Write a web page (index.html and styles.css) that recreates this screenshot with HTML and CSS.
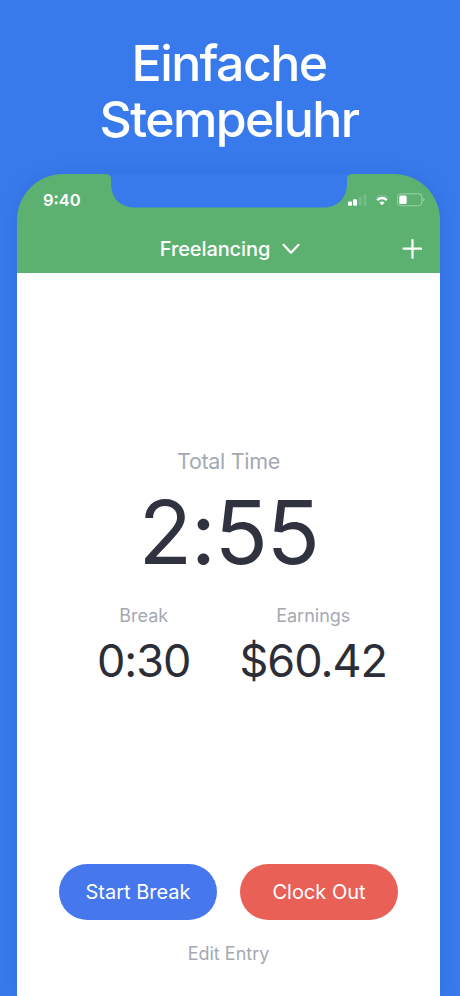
FILE: index.html
```html
<!DOCTYPE html>
<html lang="de">
<head>
    <meta charset="UTF-8">
    <meta name="viewport" content="width=device-width, initial-scale=1.0">
    <title>Einfache Stempeluhr</title>
    <link rel="stylesheet" href="styles.css">
</head>
<body>
    <h1 class="headline">Einfache<br>Stempeluhr</h1>

    <div class="phone">
        <header class="header">
            <svg class="notch" width="248" height="34" viewBox="0 0 248 34">
                <path d="M0 0H248C244.500 0 242 1.500 242 5V9C242 24 233 33.500 218 33.500H30C15 33.500 6 24 6 9V5C6 1.500 3.500 0 0 0Z" fill="#387aec"/>
            </svg>
            <div class="status-bar">
                <span class="clock">9:40</span>
                <div class="status-icons">
                    <svg width="19" height="12" viewBox="0 0 19 12" fill="#fff">
                        <rect x="0" y="7.500" width="4" height="4.300" rx="1"/>
                        <rect x="5" y="5.300" width="4" height="6.500" rx="1"/>
                        <rect x="10.800" y="2.500" width="3" height="9.300" rx="1" opacity=".15"/>
                        <rect x="15.500" y="0.300" width="3" height="11.500" rx="1" opacity=".15"/>
                    </svg>
                    <svg width="16" height="12" viewBox="0 0 16 12" fill="none" stroke="#fff">
                        <path d="M1.500 4.200Q8 -1.600 14.500 4.200" stroke-width="1.800" opacity=".15"/>
                        <path d="M3.200 6.200Q8 1.900 12.800 6.200" stroke-width="2.300"/>
                        <path d="M5.400 8.600Q8 6.400 10.600 8.600L8 11.300Z" fill="#fff" stroke="none"/>
                    </svg>
                    <svg width="28" height="14" viewBox="0 0 28 14">
                        <rect x=".5" y=".8" width="24.300" height="12" rx="3.200" fill="none" stroke="#fff" opacity=".4"/>
                        <rect x="2.300" y="2.600" width="7.400" height="8.500" rx="1.500" fill="#fff"/>
                        <path d="M26.300 4.800Q28.500 6.800 26.300 8.800Z" fill="#fff" opacity=".5"/>
                    </svg>
                </div>
            </div>
            <div class="nav-bar">
                <div class="job">
                    <span>Freelancing</span>
                    <svg width="18" height="12" viewBox="0 0 18 12" fill="none" stroke="#fff" stroke-width="2.200" stroke-linecap="round" stroke-linejoin="round">
                        <path d="M1.500 1.800L9 9.800L16.500 1.800"/>
                    </svg>
                </div>
                <svg class="add" width="20" height="20" viewBox="0 0 20 20" stroke="#fff" stroke-width="2.200" stroke-linecap="round">
                    <path d="M10.500 1.200V18.800M1.700 9.700H19.300"/>
                </svg>
            </div>
        </header>

        <main class="content">
            <div class="total">
                <div class="total-label">Total Time</div>
                <div class="total-value">2:55</div>
            </div>
            <div class="stats">
                <div class="stat">
                    <div class="stat-label">Break</div>
                    <div class="stat-value">0:30</div>
                </div>
                <div class="stat">
                    <div class="stat-label">Earnings</div>
                    <div class="stat-value">$60.42</div>
                </div>
            </div>
            <div class="actions">
                <button class="btn btn-break">Start Break</button>
                <button class="btn btn-out">Clock Out</button>
            </div>
            <a class="edit">Edit Entry</a>
        </main>
    </div>
</body>
</html>
```

FILE: styles.css
```css
* {
    margin: 0;
    padding: 0;
    box-sizing: border-box;
}

body {
    height: 996px;
    overflow: hidden;
    background-color: #387aec;
    font-family: Inter, "Liberation Sans", sans-serif;
}

.headline {
    height: 174px;
    padding: 35px 2px 0 0;
    color: white;
    font-size: 50px;
    font-weight: 500;
    line-height: 56px;
    letter-spacing: -1.6px;
    text-align: center;
}

.phone {
    display: flex;
    flex-direction: column;
    width: 423px;
    height: 822px;
    margin-left: 17px;
    border-radius: 46px 46px 0 0;
    box-shadow: 0 0 16px rgba(30, 70, 160, 0.2);
}

.header {
    position: relative;
    height: 99.4px;
    background-color: #5cb171;
    border-radius: 46px 46px 0 0;
    color: white;
}

/* notch lies over the header */
.notch {
    position: absolute;
    top: 0;
    left: 88px;
}

.status-bar {
    display: flex;
    justify-content: space-between;
    align-items: center;
    height: 52px;
    padding: 0 15px 0 26px;
}

.clock {
    font-size: 16.5px;
    font-weight: 600;
}

.status-icons {
    display: flex;
    align-items: center;
    gap: 7px;
}

.nav-bar {
    display: grid;
    grid-template-columns: 1fr auto 1fr;
    align-items: center;
    height: 45px;
    padding: 0 18px 0 19px;
}

.job {
    display: flex;
    grid-column: 2;
    align-items: center;
    gap: 12px;
    margin-left: 2px;
    font-size: 20px;
    font-weight: 500;
    letter-spacing: -0.1px;
}

.add {
    justify-self: end;
}

.content {
    display: flex;
    flex: 1;
    flex-direction: column;
    padding: 173.6px 42px 0;
    background-color: white;
    text-align: center;
}

.total-label {
    height: 28px;
    color: #a4a9b2;
    font-size: 21.5px;
    line-height: 28px;
    letter-spacing: -0.3px;
}

.total-value {
    height: 114px;
    color: #30323f;
    font-size: 88px;
    line-height: 114px;
    letter-spacing: -1.5px;
}

.stats {
    display: grid;
    grid-template-columns: 1fr 1fr;
    margin-top: 14px;
}

.stat-label {
    color: #a4a9b2;
    font-size: 18px;
    line-height: 26px;
}

.stat-value {
    height: 66px;
    color: #2c2e37;
    font-size: 45px;
    line-height: 64px;
    letter-spacing: -1px;
}

.actions {
    display: flex;
    gap: 23px;
    margin-top: 169px;
}

.btn {
    flex: 1;
    height: 56.5px;
    border: none;
    border-radius: 29px;
    color: white;
    font-family: inherit;
    font-size: 20px;
}

.btn-break {
    background-color: #4677ec;
}

.btn-out {
    background-color: #e96057;
}

.edit {
    margin-top: 22px;
    color: #a4a9b2;
    font-size: 18px;
    line-height: 24px;
}
```
